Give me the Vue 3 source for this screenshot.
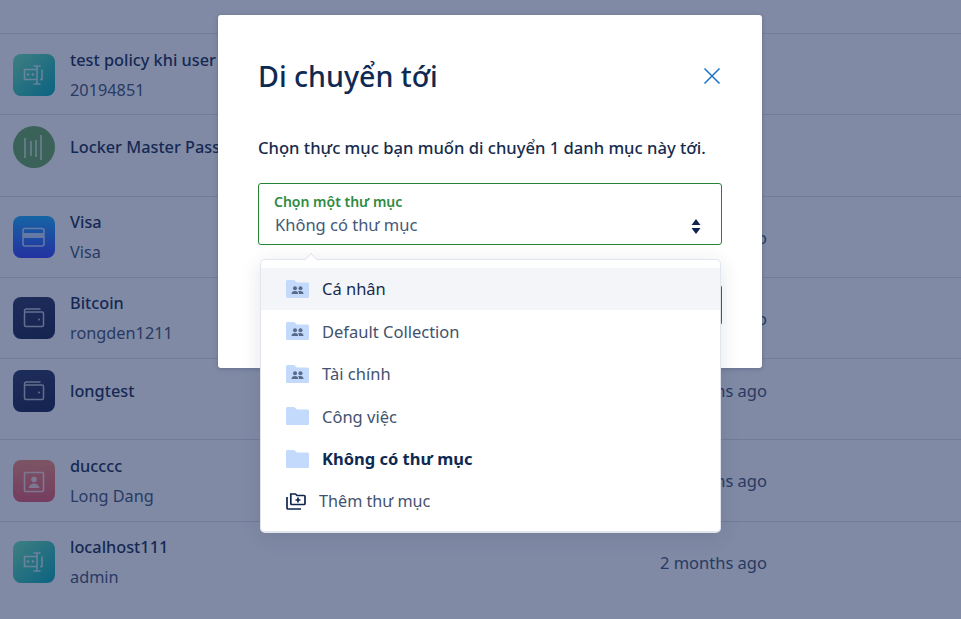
<script setup>
const rows = [
  { id: 1, name: 'test policy khi user', sub: '20194851', icon: 'field', time: '' },
  { id: 2, name: 'Locker Master Password', sub: '', icon: 'master', time: '' },
  { id: 3, name: 'Visa', sub: 'Visa', icon: 'card', time: '2 months ago' },
  { id: 4, name: 'Bitcoin', sub: 'rongden1211', icon: 'wallet', time: '2 months ago' },
  { id: 5, name: 'longtest', sub: '', icon: 'wallet', time: '2 months ago' },
  { id: 6, name: 'ducccc', sub: 'Long Dang', icon: 'contact', time: '2 months ago' },
  { id: 7, name: 'localhost111', sub: 'admin', icon: 'field', time: '2 months ago' }
]
const folders = [
  { name: 'Cá nhân', shared: true, active: true },
  { name: 'Default Collection', shared: true },
  { name: 'Tài chính', shared: true },
  { name: 'Công việc', shared: false },
  { name: 'Không có thư mục', shared: false, selected: true }
]
</script>

<template>
  <div class="page">
    <div class="list">
      <div v-for="r in rows" :key="r.id" class="row">
        <div class="row-main" :class="{ short: !r.sub }">
          <div class="tile" :class="'t-' + r.icon">
            <svg v-if="r.icon === 'field'" viewBox="0 0 42 42" width="42" height="42" fill="none" stroke="#fff" stroke-width="1.6">
              <path d="M24 15.5H11.5v10H24" />
              <circle cx="15" cy="20.5" r="1.3" fill="#fff" stroke="none" />
              <circle cx="20" cy="20.5" r="1.3" fill="#fff" stroke="none" />
              <path d="M29 15.5v10h-2M24 12v18M20.5 12h7M20.5 30h7" />
            </svg>
            <svg v-else-if="r.icon === 'master'" viewBox="0 0 42 42" width="42" height="42" fill="none" stroke="#fff" stroke-width="1.6">
              <path d="M12 12v20M18 15v15M23 14v17M28 9v25" />
            </svg>
            <svg v-else-if="r.icon === 'card'" viewBox="0 0 42 42" width="42" height="42" fill="none" stroke="#fff" stroke-width="1.6">
              <rect x="10" y="12.5" width="21" height="17.5" rx="2" />
              <rect x="10" y="17" width="21" height="5" fill="#fff" stroke="none" />
            </svg>
            <svg v-else-if="r.icon === 'wallet'" viewBox="0 0 42 42" width="42" height="42" fill="none" stroke="#fff" stroke-width="1.5">
              <path d="M11.5 15.5v-1.5a2 2 0 0 1 2-2h14" />
              <rect x="11.5" y="15" width="19" height="14.5" rx="1.5" />
              <circle cx="26" cy="22.5" r="1" fill="#fff" stroke="none" />
            </svg>
            <svg v-else viewBox="0 0 42 42" width="42" height="42" fill="none" stroke="#fff" stroke-width="1.6">
              <rect x="11.5" y="12.5" width="19" height="19" rx="1" />
              <circle cx="21" cy="19.5" r="2.8" fill="#fff" stroke="none" />
              <path d="M15.5 28c.5-3 3-4.5 5.500-4.500s5 1.500 5.500 4.500z" fill="#fff" stroke="none" />
            </svg>
          </div>
          <div class="text">
            <div class="name">{{ r.name }}</div>
            <div v-if="r.sub" class="sub">{{ r.sub }}</div>
          </div>
          <div class="time">{{ r.time }}</div>
        </div>
      </div>
    </div>

    <div class="overlay">
      <div class="modal">
        <div class="head">
          <h1 class="title">Di chuyển tới</h1>
          <svg class="close" viewBox="0 0 18 18" width="18" height="18" fill="none" stroke="#1b74c9" stroke-width="1.5">
            <path d="M1.500 1.500l15 15M16.500 1.500l-15 15" />
          </svg>
        </div>
        <p class="desc">Chọn thực mục bạn muốn di chuyển 1 danh mục này tới.</p>
        <div class="select-wrap">
          <div class="select">
            <div class="label">Chọn một thư mục</div>
            <div class="value">Không có thư mục</div>
            <svg class="arrows" viewBox="0 0 10 16" width="10" height="15" preserveAspectRatio="none" fill="#0f2550">
              <path d="M5 0l4.500 6.500h-9zM5 16l-4.500-6.500h9z" />
            </svg>
          </div>
          <div class="menu">
            <span class="notch"></span>
            <div
              v-for="f in folders"
              :key="f.name"
              class="opt"
              :class="{ active: f.active, selected: f.selected }"
            >
              <svg class="folder" viewBox="0 0 23 18" width="23" height="18">
                <path d="M0 1.500A1.500 1.500 0 0 1 1.500 0H8l3 2.500h10.500A1.500 1.500 0 0 1 23 4v12.500a1.500 1.500 0 0 1-1.500 1.500h-20A1.500 1.500 0 0 1 0 16.500z" fill="#c3dafc" />
                <g v-if="f.shared" fill="#5a6a8a">
                  <circle cx="9" cy="8.300" r="2" />
                  <circle cx="14.500" cy="8.300" r="2" />
                  <path d="M5.500 14c0-2 1.500-3 3.500-3s3.200 1 3.200 3zM13 14c0-1.200-.3-2.200-1-2.900.8-.2 1.800-.2 2.500-.1 1.800 0 3 1 3 3z" />
                </g>
              </svg>
              <span>{{ f.name }}</span>
            </div>
            <div class="opt add">
              <svg class="add-icon" viewBox="0 0 20 17" width="20" height="17" fill="none" stroke="#0f2550" stroke-width="1.700">
                <path d="M4.800 1v9.500a1 1 0 0 0 1 1H18a1 1 0 0 0 1-1V3.500a1 1 0 0 0-1-1h-7l-1.500-1.500z" />
                <path d="M1 4v11a1 1 0 0 0 1 1h13" />
                <path d="M12 4.500v5M9.500 7h5" />
              </svg>
              <span>Thêm thư mục</span>
            </div>
          </div>
        </div>
        <div class="foot">
          <div class="btn"></div>
        </div>
      </div>
    </div>
  </div>
</template>

<style scoped>
.page {
  position: relative;
  width: 961px;
  height: 619px;
  overflow: hidden;
  background: #fff;
  font-family: "Noto Sans", "Open Sans", sans-serif;
  color: #172b4d;
}
.list {
  padding-top: 33px;
}
.row {
  box-sizing: border-box;
  height: 81.28px;
  border-top: 1px solid #dfe1e8;
  padding: 10px 194px 10px 13px;
}
.row-main {
  display: flex;
  align-items: center;
  height: 61px;
}
.row-main.short {
  height: 43px;
}
.tile {
  flex: none;
  width: 42px;
  height: 42px;
  margin-right: 15px;
  border-radius: 8px;
  overflow: hidden;
}
.tile svg {
  display: block;
  opacity: 0.72;
}
.t-field {
  background: linear-gradient(135deg, #73e6b0, #00aab0);
}
.t-master {
  border-radius: 50%;
  background: #6aa85a;
}
.t-card {
  background: linear-gradient(180deg, #1aadff, #3540f5);
}
.t-wallet {
  background: linear-gradient(160deg, #2a355d, #141f46);
}
.t-contact {
  background: linear-gradient(180deg, #f58c72, #e85668);
}
.text {
  flex: 1;
  min-width: 0;
}
.name {
  font-size: 16.300px;
  font-weight: 500;
  line-height: 30px;
  color: #172b4d;
  white-space: nowrap;
}
.sub {
  font-size: 16.300px;
  line-height: 30px;
  color: #42526e;
}
.time {
  font-size: 16.500px;
  color: #42526e;
  white-space: nowrap;
}
.overlay {
  position: absolute;
  inset: 0;
  box-sizing: border-box;
  padding: 15px 0 0 218px;
  background: rgba(20, 38, 88, 0.54);
}
.modal {
  box-sizing: border-box;
  width: 544px;
  height: 353px;
  padding: 40px 40px 0 40px;
  background: #fff;
  border-radius: 3px;
  box-shadow: 0 1px 4px rgba(9, 30, 66, 0.25);
}
.head {
  display: flex;
  justify-content: space-between;
  align-items: center;
  height: 42px;
}
.title {
  margin: 0;
  font-size: 28.600px;
  font-weight: 500;
  line-height: 42px;
  color: #0f2a52;
}
.close {
  margin-right: 1px;
  display: block;
}
.desc {
  margin: 39px 0 0;
  font-size: 16.600px;
  font-weight: 500;
  line-height: 24px;
  color: #172b4d;
  white-space: nowrap;
}
.select-wrap {
  position: relative;
  margin-top: 23px;
}
.select {
  position: relative;
  box-sizing: border-box;
  height: 62px;
  padding: 9px 15px 0;
  border: 1px solid #268334;
  border-radius: 3px;
}
.label {
  font-size: 14px;
  font-weight: 600;
  line-height: 18px;
  color: #2e8b3f;
}
.value {
  padding-left: 1px;
  font-size: 16.500px;
  line-height: 28px;
  color: #42597a;
}
.arrows {
  position: absolute;
  right: 20px;
  top: 35px;
}
.menu {
  position: absolute;
  z-index: 2;
  top: 76px;
  left: 2px;
  box-sizing: border-box;
  width: 461px;
  height: 274px;
  padding: 7.500px 0 0;
  background: #fff;
  border: 1px solid #e3e5ee;
  border-bottom-width: 2px;
  border-radius: 5px;
  box-shadow: 0 4px 20px rgba(23, 43, 77, 0.12);
}
.notch {
  position: absolute;
  top: -5px;
  left: 45px;
  width: 9px;
  height: 9px;
  background: #fff;
  border-top: 1px solid #e3e5ee;
  border-left: 1px solid #e3e5ee;
  transform: rotate(45deg);
}
.opt {
  display: flex;
  align-items: center;
  height: 42.500px;
  padding-left: 25px;
  font-size: 16.500px;
  color: #42526e;
}
.opt.active {
  position: relative;
  background: #f4f5f9;
  color: #172b4d;
}
.opt.selected {
  font-weight: 700;
  color: #0f2a52;
}
.opt.add {
  font-size: 16.200px;
}
.folder {
  flex: none;
  margin-right: 13px;
  display: block;
}
.add-icon {
  flex: none;
  margin-right: 13px;
  display: block;
}
.foot {
  display: flex;
  justify-content: flex-end;
  margin-top: 40px;
}
.btn {
  width: 100px;
  height: 40px;
  border-radius: 3px;
  background: #1f7a35;
}
</style>
